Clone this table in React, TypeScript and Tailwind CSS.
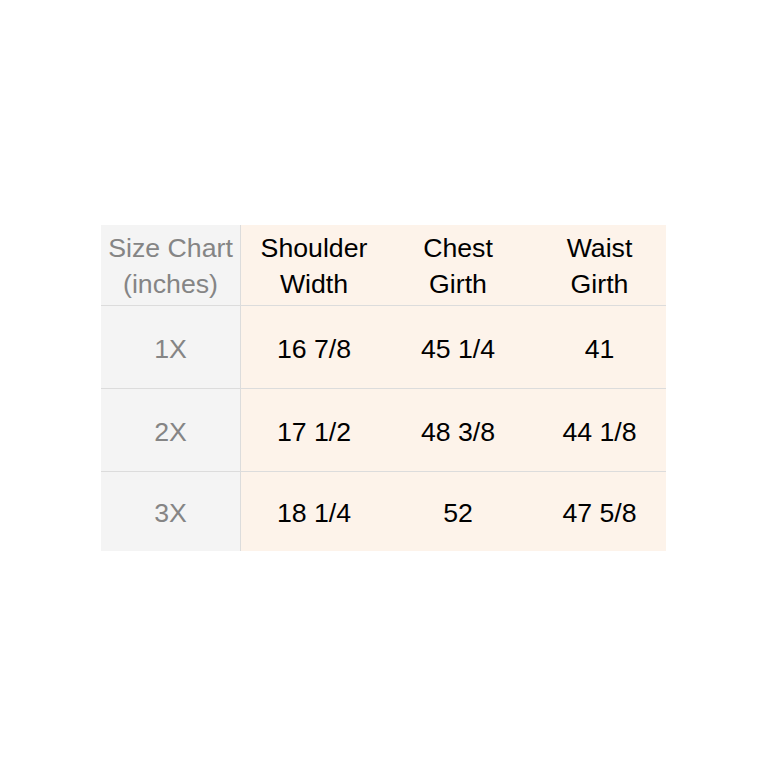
import React from "react";

const rows = [
  ["1X", "16 7/8", "45 1/4", "41"],
  ["2X", "17 1/2", "48 3/8", "44 1/8"],
  ["3X", "18 1/4", "52", "47 5/8"],
];

export default function App() {
  return (
    <div className="w-[768px] h-[768px] bg-white pt-[225px] pl-[101px] font-['Liberation_Sans',Arial,sans-serif]">
      <div className="w-[565px] grid grid-cols-[140px_146px_142px_137px] grid-rows-[81px_83px_83px_79px] text-[26.7px] leading-[36px]">
        <div className="bg-[#f4f4f4] border-r border-b border-[#dcdcdc] flex items-center justify-center text-center text-[#858585] pt-[2px]">
          <div>Size Chart<br />(inches)</div>
        </div>
        {[["Shoulder", "Width"], ["Chest", "Girth"], ["Waist", "Girth"]].map((h, i) => (
          <div key={i} className={`bg-[#fdf3ea] border-b border-[#dcdcdc] flex items-center justify-center text-center text-black pt-[2px] ${i === 2 ? "pl-[4px]" : ""}`}>
            <div>{h[0]}<br />{h[1]}</div>
          </div>
        ))}
        {rows.map((r, ri) => (
          <React.Fragment key={ri}>
            <div className={`bg-[#f4f4f4] border-r border-[#dcdcdc] ${ri < 2 ? "border-b" : ""} flex items-center justify-center text-[#858585] pt-[3px]`}>{r[0]}</div>
            {r.slice(1).map((c, ci) => (
              <div key={ci} className={`bg-[#fdf3ea] ${ri < 2 ? "border-b border-[#dcdcdc]" : ""} flex items-center justify-center text-black pt-[3px] ${ci === 2 ? "pl-[4px]" : ""}`}>{c}</div>
            ))}
          </React.Fragment>
        ))}
      </div>
    </div>
  );
}
